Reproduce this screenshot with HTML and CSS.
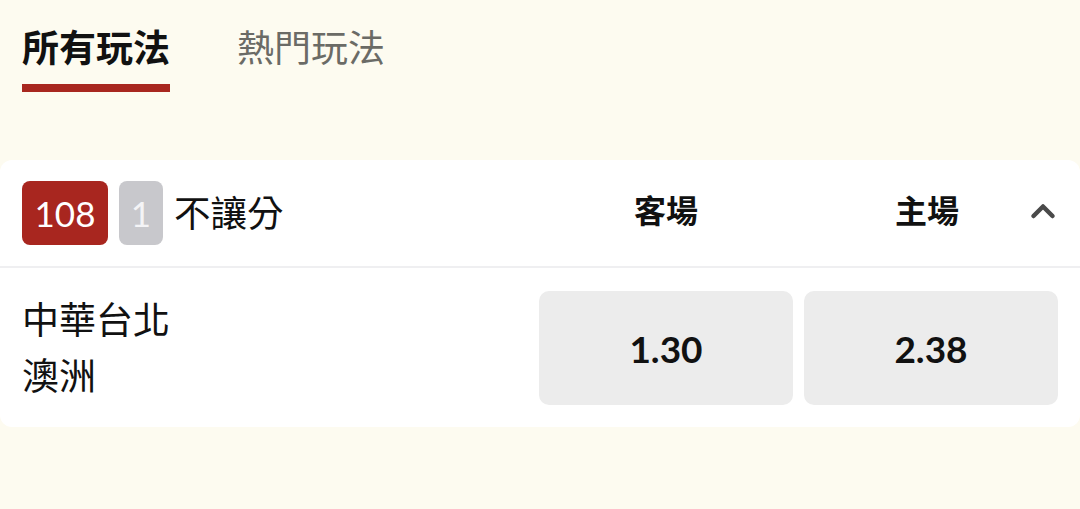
FILE: index.html
```html
<!DOCTYPE html>
<html lang="zh-Hant">
<head>
<meta charset="utf-8">
<link rel="stylesheet" href="styles.css">
</head>
<body>
<div class="page">
  <nav class="tabs">
    <div class="tab active">所有玩法</div>
    <div class="tab">熱門玩法</div>
  </nav>
  <section class="card">
    <div class="card-head">
      <div class="title">
        <span class="badge red">108</span>
        <span class="badge gray">1</span>
        <span class="name">不讓分</span>
      </div>
      <div class="col-label">客場</div>
      <div class="col-label last">
        <span></span>
        <span class="lbl">主場</span>
        <span class="chev">
          <svg width="26" height="18" viewBox="0 0 26 18"><path d="M3.5 14 L13 4.5 L22.5 14" fill="none" stroke="#4a4a4a" stroke-width="4.5" stroke-linecap="round" stroke-linejoin="round"/></svg>
        </span>
      </div>
    </div>
    <div class="row">
      <div class="teams">
        <div class="team">中華台北</div>
        <div class="team">澳洲</div>
      </div>
      <button class="odd">1.30</button>
      <button class="odd">2.38</button>
    </div>
  </section>
</div>
</body>
</html>
```
FILE: styles.css
```css
* { box-sizing: border-box; }
html, body {
  margin: 0;
  padding: 0;
  background: #fdfbf0;
  font-family: Lato, "Noto Sans CJK TC", sans-serif;
  color: #111;
}
.page {
  width: 1080px;
  height: 509px;
  overflow: hidden;
}
.tabs {
  display: flex;
  gap: 67px;
  padding: 22px 22px 0;
}
.tab {
  font-size: 37px;
  line-height: 52px;
  color: #6b6b66;
  padding-bottom: 10px;
  border-bottom: 8px solid transparent;
}
.tab.active {
  color: #111;
  font-weight: 700;
  border-bottom-color: #a8271f;
}
.card {
  margin-top: 68px;
  background: #fff;
  border-radius: 12px;
}
.card-head, .row {
  display: grid;
  grid-template-columns: 1fr 254px 254px;
  column-gap: 11px;
  padding: 0 22px;
}
.card-head {
  height: 108px;
  align-items: center;
  border-bottom: 2px solid #efeff1;
}
.title {
  display: flex;
  align-items: center;
  gap: 11px;
}
.badge {
  height: 64px;
  border-radius: 8px;
  color: #fff;
  font-size: 35px;
  line-height: 64px;
  text-align: center;
}
.badge.red { background: #a8261f; width: 86px; }
.badge.gray { background: #c8c8cc; width: 44px; color: #f4f4f6; }
.name {
  font-size: 36.5px;
  line-height: 64px;
  color: #111;
}
.col-label {
  font-size: 32px;
  font-weight: 700;
  text-align: center;
  line-height: 44px;
  margin-top: -4px;
}
.col-label.last {
  display: grid;
  grid-template-columns: 1fr auto 1fr;
  align-items: center;
  padding-right: 2px;
  margin-left: -6px;
}
.chev {
  justify-self: end;
  display: flex;
}
.row {
  padding-top: 23px;
  padding-bottom: 22px;
  align-items: center;
}
.teams {
  display: flex;
  flex-direction: column;
}
.team {
  font-size: 37px;
  line-height: 56px;
}
.odd {
  height: 114px;
  border: none;
  border-radius: 10px;
  background: #ececec;
  font-family: Lato, "Noto Sans CJK TC", sans-serif;
  font-size: 37px;
  font-weight: 700;
  color: #111;
}
```
